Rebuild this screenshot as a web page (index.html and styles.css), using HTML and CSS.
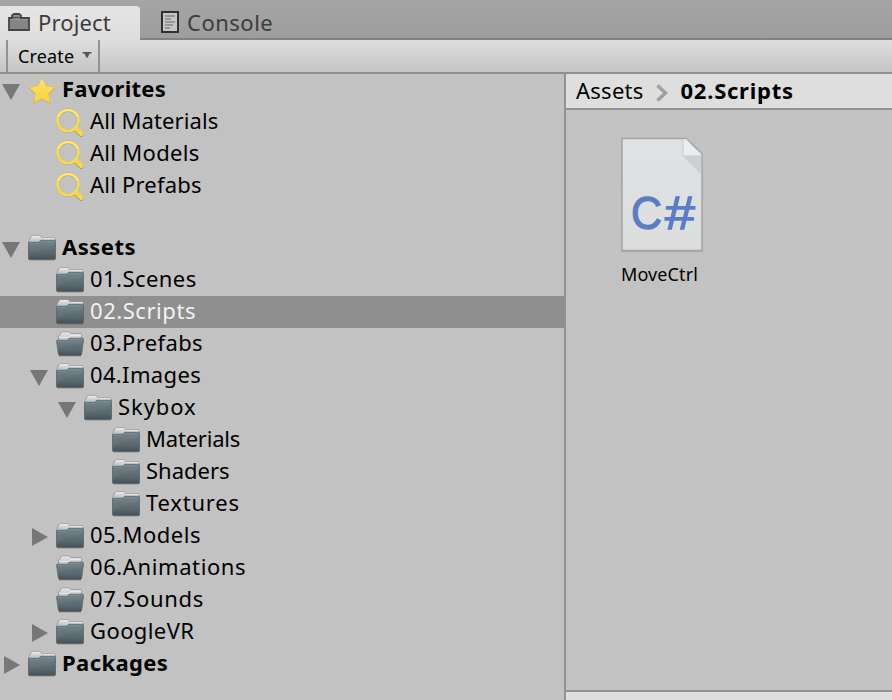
FILE: index.html
```
<!DOCTYPE html>
<html lang="en">
<head>
<meta charset="utf-8">
<title>Project</title>
<link rel="stylesheet" href="styles.css">
</head>
<body>
<svg class="defs" width="0" height="0" aria-hidden="true">
  <defs>
    <linearGradient id="front" x1="0" y1="0" x2="0" y2="1"><stop offset="0" stop-color="#71828a"/><stop offset=".7" stop-color="#58666d"/><stop offset="1" stop-color="#455057"/></linearGradient>
    <linearGradient id="paper" x1="0" y1="0" x2="0" y2="1"><stop offset="0" stop-color="#e6e6e6"/><stop offset="1" stop-color="#b0b0b0"/></linearGradient>
    <linearGradient id="gold" x1="0" y1="0" x2="0" y2="1"><stop offset="0" stop-color="#fbe68a"/><stop offset=".4" stop-color="#fbdc50"/><stop offset="1" stop-color="#f8d246"/></linearGradient>
    <linearGradient id="sheet" x1="0" y1="0" x2="0" y2="1"><stop offset="0" stop-color="#dfe3e5"/><stop offset="1" stop-color="#dcdddd"/></linearGradient>
    <symbol id="folder" viewBox="0 0 28 32">
      <path d="M.8 12V8.500L3 4.800Q3.400 3.800 4.500 3.800H12L14.500 5.800H26Q27.300 5.800 27.300 7V12Z" fill="url(#paper)" stroke="#8c8c8c" stroke-width=".7"/>
      <path d="M4 4.700H12M14.500 6.700H26.500" stroke="#f4f4f4" stroke-width=".8"/>
      <path d="M.3 11.700Q.3 10.300 1.600 10.300H10.500L13 8.300H26.300Q27.700 8.300 27.700 9.600V26Q27.700 27.500 26.300 27.500H1.800Q.3 27.500.3 26Z" fill="url(#front)" stroke="#56626a" stroke-width=".8"/>
      <path d="M1.300 11.300H11L13.500 9.300H26.800" fill="none" stroke="#82939a" stroke-width=".7"/>
      <path d="M1 22 27 13V9.500H13.500L11 11.500H1Z" fill="#fff" opacity=".03"/>
      <path d="M1 28.300H27" stroke="#555" stroke-width=".8" opacity=".35"/>
    </symbol>
    <symbol id="folder-open" viewBox="0 0 28 32">
      <path d="M2.600 16V8L4 7 5 4.800Q5.400 3.800 6.500 3.800H13L14.500 5.400H24.500Q25.400 5.400 25.400 6.500V16Z" fill="url(#paper)" stroke="#8c8c8c" stroke-width=".7"/>
      <path d="M3 9.300H13L15 7.500H25" fill="none" stroke="#f4f4f4" stroke-width=".7"/>
      <path d="M.6 13.200Q.4 12.300 1.400 12.300H11L13.500 10.300H26.500Q27.600 10.300 27.500 11.400L25.600 26Q25.400 27.500 24 27.500H4Q2.600 27.500 2.400 26Z" fill="url(#front)" stroke="#56626a" stroke-width=".8"/>
      <path d="M1.400 13.200H11.300L13.800 11.200H26.800" fill="none" stroke="#82939a" stroke-width=".7"/>
      <path d="M2 22 26 14V11H13.500L11 13H1Z" fill="#fff" opacity=".03"/>
      <path d="M3 28.300H25" stroke="#555" stroke-width=".8" opacity=".35"/>
    </symbol>
    <symbol id="star" viewBox="0 0 28 32">
      <path d="M14 4.500 18 12.900 27.600 14 20.600 20.400 22.600 30 14 25.300 5.300 30 7.400 20.400.4 14 10 12.900Z" fill="#777" opacity=".4"/>
      <path d="M14 3.700 18.100 12 27.400 13.200 20.600 19.600 22.400 29.200 14 24.700 5.600 29.200 7.400 19.600.6 13.200 9.900 12Z" fill="url(#gold)" stroke="#e4bf51" stroke-width=".7" stroke-linejoin="round"/>
    </symbol>
    <symbol id="search" viewBox="0 0 28 32">
      <g fill="none" stroke-linecap="round">
        <path d="M20 23.500 25.300 28.600" stroke="#999474" stroke-width="4.600"/>
        <circle cx="12" cy="14.700" r="10.500" stroke="#b5a465" stroke-width="3.200"/>
        <path d="M19.500 22 25.300 28" stroke="#f7d64a" stroke-width="4.200"/>
        <circle cx="12" cy="14.500" r="10.500" stroke="#f9da50" stroke-width="2.700"/>
        <path d="M2.300 10.500A10.500 10.500 0 0 1 21.700 10.500" stroke="#fbe991" stroke-width="1.500"/>
      </g>
    </symbol>
    <symbol id="down" viewBox="0 0 28 32"><path d="M2 10H20L11 26Z" fill="#777"/></symbol>
    <symbol id="right" viewBox="0 0 28 32"><path d="M4 8V26L20 17Z" fill="#777"/></symbol>
  </defs>
</svg>
<div class="window">
  <header class="tabs">
    <div class="tab active">
      <svg class="tab-folder" width="22" height="18" viewBox="0 0 22 18"><path d="M1 17V5H4V2.500L6 1H11L13 2.500V5H21V17Z" fill="#858585" stroke="#444" stroke-width="1.800"/><path d="M4 4.500H13" stroke="#555" stroke-width="1.200"/><path d="M5.500 2.700H11.500M2 6.500H20" stroke="#999"/></svg>
      <span class="t-project">Project</span>
    </div>
    <div class="tab">
      <svg class="tab-page" width="18" height="22" viewBox="0 0 18 22"><path d="M1 1H17V21H1Z" fill="#c6c6c6" stroke="#303030" stroke-width="2"/><path d="M4 5H14M4 8H10M4 11H14M4 14H12M4 17H9" stroke="#888" stroke-width="1.500"/></svg>
      <span class="t-console">Console</span>
    </div>
  </header>
  <div class="toolbar">
    <div class="create"><span>Create</span><svg width="10" height="6" viewBox="0 0 10 6"><path d="M.5 0H9.500V1.500H7.500L5.800 5.500H4.200L2.500 1.500H.5Z" fill="#555"/></svg></div>
  </div>
  <main class="body">
    <nav class="tree">
      <div class="row bold"><svg><use href="#down"/></svg><svg><use href="#star"/></svg><span class="l-favorites">Favorites</span></div>
      <div class="row d1"><svg><use href="#search"/></svg><span class="l-allmaterials">All Materials</span></div>
      <div class="row d1"><svg><use href="#search"/></svg><span class="l-allmodels">All Models</span></div>
      <div class="row d1"><svg><use href="#search"/></svg><span class="l-allprefabs">All Prefabs</span></div>
      <div class="row bold section"><svg><use href="#down"/></svg><svg><use href="#folder"/></svg><span class="l-assets">Assets</span></div>
      <div class="row d1"><svg><use href="#folder"/></svg><span class="l-scenes">01.Scenes</span></div>
      <div class="row d1 selected"><svg><use href="#folder"/></svg><span class="l-scripts">02.Scripts</span></div>
      <div class="row d1"><svg><use href="#folder-open"/></svg><span class="l-prefabs">03.Prefabs</span></div>
      <div class="row d1 branch"><svg><use href="#down"/></svg><svg><use href="#folder"/></svg><span class="l-images">04.Images</span></div>
      <div class="row d2 branch"><svg><use href="#down"/></svg><svg><use href="#folder"/></svg><span class="l-skybox">Skybox</span></div>
      <div class="row d3"><svg><use href="#folder"/></svg><span class="l-materials">Materials</span></div>
      <div class="row d3"><svg><use href="#folder"/></svg><span class="l-shaders">Shaders</span></div>
      <div class="row d3"><svg><use href="#folder"/></svg><span class="l-textures">Textures</span></div>
      <div class="row d1 branch"><svg><use href="#right"/></svg><svg><use href="#folder"/></svg><span class="l-models">05.Models</span></div>
      <div class="row d1"><svg><use href="#folder-open"/></svg><span class="l-animations">06.Animations</span></div>
      <div class="row d1"><svg><use href="#folder-open"/></svg><span class="l-sounds">07.Sounds</span></div>
      <div class="row d1 branch"><svg><use href="#right"/></svg><svg><use href="#folder"/></svg><span class="l-googlevr">GoogleVR</span></div>
      <div class="row bold"><svg><use href="#right"/></svg><svg><use href="#folder"/></svg><span class="l-packages">Packages</span></div>
    </nav>
    <section class="content">
      <div class="crumbs">
        <span class="c-assets">Assets</span>
        <svg width="12" height="18" viewBox="0 0 12 18"><path d="M1.500 1.500 9.500 9 1.500 16.500" fill="none" stroke="#a0a0a0" stroke-width="3.500"/></svg>
        <span class="c-scripts">02.Scripts</span>
      </div>
      <div class="files">
        <figure class="file">
          <svg width="86" height="118" viewBox="0 0 86 118">
            <path d="M1.500 4H66L82.500 20V116H1.500Z" fill="#888" opacity=".4"/>
            <path d="M2 2.500H66L82 17.500V114.500H2Z" fill="url(#sheet)" stroke="#a3a5a6" stroke-width="1.500"/>
            <path d="M63 20H81.300V39Z" fill="#ccd0d2"/>
            <path d="M63 3V20H81.500L66 3Z" fill="#eaeef0"/>
            <path d="M63 3V20H81.500" fill="none" stroke="#c8ccce" stroke-width="1"/>
            <text class="lang" x="11" y="93" textLength="31" lengthAdjust="spacingAndGlyphs">C</text>
            <text class="lang" x="45" y="93" textLength="30" lengthAdjust="spacingAndGlyphs">#</text>
          </svg>
          <figcaption>MoveCtrl</figcaption>
        </figure>
      </div>
      <footer class="status"></footer>
    </section>
  </main>
</div>
</body>
</html>
```
FILE: styles.css
```
* { box-sizing: border-box; }
body { margin: 0; background: #c2c2c2; color: #000; font: 22px/28px "Noto Sans", sans-serif; }
svg { display: block; flex: none; }
.defs { position: absolute; }
.window { width: 892px; height: 700px; display: flex; flex-direction: column; overflow: hidden; }
span, figcaption { white-space: nowrap; }

.tabs { height: 40px; flex: none; display: flex; align-items: flex-end; background: linear-gradient(#a5a5a5, #9d9d9d 38px, #818181 38px); color: #3c3c3c; line-height: 32px; }
.tab { display: flex; height: 34px; padding-left: 20px; }
.tab.active { width: 140px; padding-left: 8px; border-top-right-radius: 4px; background: linear-gradient(#e5e5e5, #dedede); }
.tab:last-child { padding-left: 21px; }
.tab-folder { margin: 7px 8px 0 0; }
.tab-page { margin: 5px 8px 0 0; }
.t-project { letter-spacing: .15px; }
.t-console { letter-spacing: .5px; }

.toolbar { height: 34px; flex: none; padding-left: 6px; border-bottom: 2px solid #8f8f8f; background: linear-gradient(#dedede, #c5c5c5); }
.create { display: flex; width: 94px; height: 32px; padding-left: 10px; border: solid #929292; border-width: 0 2px; font-size: 18px; line-height: 32px; letter-spacing: .15px; }
.create svg { margin: 12px 0 0 8px; }

.body { flex: 1; display: flex; min-height: 0; }
.tree { width: 564px; }
.row { display: flex; height: 32px; }
.row svg { width: 28px; height: 32px; }
.row span { margin-left: 6px; }
.bold { font-weight: 700; }
.section { margin-top: 30px; }
.d1 { padding-left: 56px; }
.d2 { padding-left: 84px; }
.d3 { padding-left: 112px; }
.d1.branch { padding-left: 28px; }
.d2.branch { padding-left: 56px; }
.selected { background: #8f8f8f; color: #f2f2f2; }

/* Per-label tracking */
.l-favorites { letter-spacing: .25px; }
.l-allmaterials { letter-spacing: .1px; }
.l-allmodels { letter-spacing: .3px; }
.l-allprefabs { letter-spacing: .2px; }
.l-assets { letter-spacing: .5px; }
.l-scenes { letter-spacing: .45px; }
.l-scripts { letter-spacing: .55px; }
.l-prefabs { letter-spacing: .35px; }
.l-images { letter-spacing: .35px; }
.l-skybox { letter-spacing: .9px; }
.l-materials { letter-spacing: -.2px; }
.l-textures { letter-spacing: .8px; }
.l-models { letter-spacing: .5px; }
.l-animations { letter-spacing: .6px; }
.l-sounds { letter-spacing: .7px; }
.l-googlevr { letter-spacing: .4px; }
.l-packages { letter-spacing: .4px; }

.content { flex: 1; display: flex; flex-direction: column; border-left: 2px solid #929292; }
.crumbs { height: 36px; padding: 2px 0 0 10px; display: flex; border-bottom: 2px solid #929292; background: #dedede; }
.crumbs svg { margin: 8px 13px 0 12px; }
.c-assets { letter-spacing: .25px; }
.c-scripts { font-weight: 700; letter-spacing: .75px; }
.files { flex: 1; padding: 26px 0 0 54px; }
.file { margin: 0; width: 86px; }
.lang { font: 47px "Liberation Sans", sans-serif; fill: #5b7dc5; stroke: #5b7dc5; stroke-width: 1.3px; }
figcaption { margin: 6px 0 0 1px; font-size: 18px; letter-spacing: .1px; }
.status { height: 10px; border-top: 2px solid #929292; background: #dedede; }
```
